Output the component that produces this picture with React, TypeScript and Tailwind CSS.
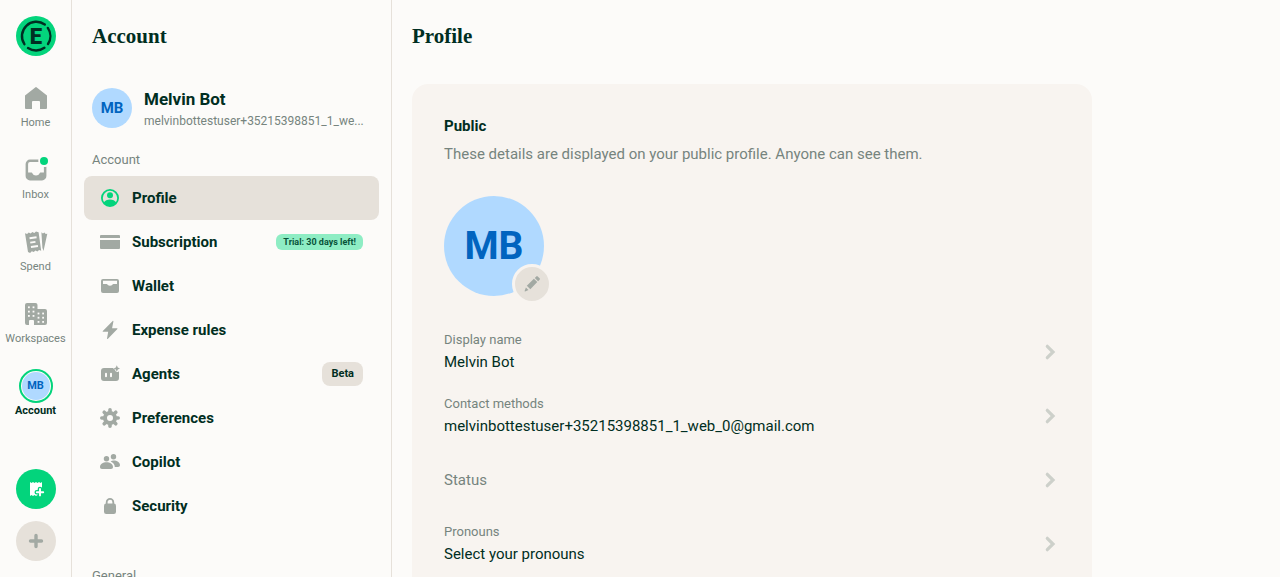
import React from "react";

type IconProps = { className?: string };

const LogoIcon: React.FC = () => (
  <svg viewBox="0 0 40 40" className="h-10 w-10" aria-hidden="true">
    <circle cx="20" cy="20" r="20" fill="#03d47c" />
    <g fill="none" stroke="#002e22" strokeWidth="2.4" strokeLinecap="round">
      <path d="M8.4 28.2A14.4 14.4 0 0 1 28.8 8.5" />
      <path d="M31.8 11.9A14.4 14.4 0 0 1 32 28" />
      <path d="M12 32.1A14.4 14.4 0 0 0 28.4 31.8" />
    </g>
    <text
      x="20"
      y="27.7"
      textAnchor="middle"
      fill="#002e22"
      fontFamily="Roboto, sans-serif"
      fontSize="22"
      fontWeight="900"
    >
      E
    </text>
  </svg>
);

const HomeIcon: React.FC<IconProps> = ({ className }) => (
  <svg viewBox="0 0 24 24" fill="currentColor" className={className} aria-hidden="true">
    <path d="M1 9.4 11.2 1.4a1.3 1.3 0 0 1 1.6 0L23 9.4V22a1 1 0 0 1-1 1h-6v-7a1 1 0 0 0-1-1H9a1 1 0 0 0-1 1v7H2a1 1 0 0 1-1-1z" />
  </svg>
);

const InboxIcon: React.FC<IconProps> = ({ className }) => (
  <svg viewBox="0 0 24 24" fill="currentColor" className={className} aria-hidden="true">
    <path
      fillRule="evenodd"
      d="M6 1.6h8.4a6 6 0 0 0 0 2.5H6A1.9 1.9 0 0 0 4.1 6v8.6h3c.8 0 1.1.5 1.6 1.2.6.9 1.5 1.6 3.3 1.6s2.7-.7 3.3-1.6c.5-.7.8-1.2 1.6-1.2h3V9a6 6 0 0 0 2.5-.3V18a4.400 4.400 0 0 1-4.400 4.400H6A4.400 4.400 0 0 1 1.600 18V6A4.400 4.400 0 0 1 6 1.600z"
    />
    <circle cx="20" cy="3" r="4" fill="#03d47c" />
  </svg>
);

const SpendIcon: React.FC<IconProps> = ({ className }) => (
  <svg viewBox="0 0 24 24" fill="currentColor" className={className} aria-hidden="true">
    <path
      fillRule="evenodd"
      d="m1 3.3 2.1.8 1.6-1.6 2 1 1.6-1.6 2 1 1.7-1.5 2.6.8 2.6 18.6-2.1-.8-1.7 1.5-2-.9-1.6 1.5-2-.9-1.7 1.7-2.1-1zm4.4 4 .3 1.9 7-1-.3-1.9zm.7 4.4.3 1.9 5.2-.8-.3-1.9zm.7 4.4.3 1.9 7-1-.3-1.9z"
    />
    <path d="m17.4 2.3 1.5 1.2 1.6-.9 1.2 1.3 1.6-.2-3.8 17.3-1.1-3.3z" />
  </svg>
);

const WorkspacesIcon: React.FC<IconProps> = ({ className }) => (
  <svg viewBox="0 0 24 24" className={className} aria-hidden="true">
    <path
      fill="currentColor"
      d="M3 1h8.5a2 2 0 0 1 2 2v4H21a2 2 0 0 1 2 2v12a2 2 0 0 1-2 2H10v-4a1 1 0 0 0-1-1H6a1 1 0 0 0-1 1v4H3a2 2 0 0 1-2-2V3a2 2 0 0 1 2-2z"
    />
    <g fill="#fcfbf9">
      {[4.4, 8.7, 13].map((y) => (
        <React.Fragment key={y}>
          <rect x="4" y={y} width="1.8" height="1.8" />
          <rect x="8.6" y={y} width="1.8" height="1.8" />
        </React.Fragment>
      ))}
      {[10.6, 14.8, 19].map((y) => (
        <React.Fragment key={y}>
          <rect x="13.6" y={y} width="1.8" height="1.8" />
          <rect x="18.2" y={y} width="1.8" height="1.8" />
        </React.Fragment>
      ))}
    </g>
  </svg>
);

const ReceiptPlusIcon: React.FC<IconProps> = ({ className }) => (
  <svg viewBox="0 0 20 20" className={className} aria-hidden="true">
    <path
      fill="#ffffff"
      d="m4 3 1.5 1L7 3l1.5 1L10 3l1.5 1L13 3l1.5 1L16 3v14l-1.5-1-1.5 1-1.5-1-1.5 1-1.5-1L7 17l-1.5-1L4 17z"
    />
    <path d="M14 10v6.4M10.800 13.200h6.400" stroke="#03d47c" strokeWidth="4.6" strokeLinecap="round" />
    <path d="M14 10v6.4M10.800 13.200h6.400" stroke="#ffffff" strokeWidth="1.9" strokeLinecap="round" />
  </svg>
);

const PlusIcon: React.FC<IconProps> = ({ className }) => (
  <svg viewBox="0 0 20 20" className={className} aria-hidden="true">
    <path d="M10 4.5v11M4.5 10h11" stroke="currentColor" strokeWidth="3.4" strokeLinecap="round" />
  </svg>
);

const ProfileIcon: React.FC<IconProps> = ({ className }) => (
  <svg viewBox="0 0 20 20" className={className} aria-hidden="true">
    <circle cx="10" cy="10" r="8.1" fill="none" stroke="currentColor" strokeWidth="1.8" />
    <circle cx="10" cy="7.2" r="3" fill="currentColor" />
    <path fill="currentColor" d="M3.8 14.5C5 12.6 7.3 11.6 10 11.6s5 1 6.2 2.900A8 8 0 0 1 10 18a8 8 0 0 1-6.200-3.500z" />
  </svg>
);

const CardIcon: React.FC<IconProps> = ({ className }) => (
  <svg viewBox="0 0 20 20" fill="currentColor" className={className} aria-hidden="true">
    <path d="M1 3h18a1 1 0 0 1 1 1v2H0V4a1 1 0 0 1 1-1zM0 8h20v8a1 1 0 0 1-1 1H1a1 1 0 0 1-1-1z" />
  </svg>
);

const WalletIcon: React.FC<IconProps> = ({ className }) => (
  <svg viewBox="0 0 20 20" fill="currentColor" className={className} aria-hidden="true">
    <path
      fillRule="evenodd"
      d="M3 3h14a2 2 0 0 1 2 2v10a2 2 0 0 1-2 2H3a2 2 0 0 1-2-2V5a2 2 0 0 1 2-2zm0 1.8V8h3c1 0 1.3.4 1.9 1 .5.5 1.1.8 2.1.8s1.6-.3 2.1-.8c.6-.6.9-1 1.9-1h3V4.8z"
    />
  </svg>
);

const BoltIcon: React.FC<IconProps> = ({ className }) => (
  <svg viewBox="0 0 20 20" fill="currentColor" className={className} aria-hidden="true">
    <path d="M12.7 1 2.8 11a.4.4 0 0 0 .3.7h5.1L7 18.6c0 .4.4.6.7.3L17.4 9c.2-.3 0-.7-.3-.7h-5L13.4 1.400c.1-.5-.4-.7-.7-.4z" />
  </svg>
);

const AgentsIcon: React.FC<IconProps> = ({ className }) => (
  <svg viewBox="0 0 20 20" fill="currentColor" className={className} aria-hidden="true">
    <path
      fillRule="evenodd"
      d="M4 4h9.2c.4 1 1 1.3 1.7 1.6.4 1.6 1 2.5 2.1 2.5.7 0 1.3-.3 2-.9V14a3 3 0 0 1-3 3H4a3 3 0 0 1-3-3V7a3 3 0 0 1 3-3zm2 4.7a1 1 0 0 0-1 1v2.6a1 1 0 0 0 2 0V9.700a1 1 0 0 0-1-1zm5 0a1 1 0 0 0-1 1v2.600a1 1 0 0 0 2 0V9.700a1 1 0 0 0-1-1z"
    />
    <path d="m16.8 1.2 1 2.300 2.200 1-2.200 1-1 2.300-1-2.300-2.200-1 2.200-1z" />
  </svg>
);

const GearIcon: React.FC<IconProps> = ({ className }) => (
  <svg viewBox="0 0 20 20" className={className} aria-hidden="true">
    <circle cx="10" cy="10" r="5" fill="none" stroke="currentColor" strokeWidth="4" />
    <g stroke="currentColor" strokeWidth="3.6" strokeLinecap="round">
      <path d="M10 1.8v2M10 16.2v2M1.8 10h2M16.2 10h2M4.2 4.2l1.4 1.4M14.4 14.4l1.4 1.4M4.2 15.8l1.4-1.4M14.4 5.6l1.4-1.4" />
    </g>
  </svg>
);

const CopilotIcon: React.FC<IconProps> = ({ className }) => (
  <svg viewBox="0 0 20 20" fill="currentColor" className={className} aria-hidden="true">
    <circle cx="6.5" cy="6.7" r="2.7" />
    <circle cx="13.5" cy="4.7" r="2.7" />
    <path d="M6.5 10.3c3.5 0 6.5 2 6.5 4.7 0 1.3-.7 2-2 2H2c-1.3 0-2-.7-2-2 0-2.7 3-4.7 6.5-4.7zM10.6 9.4c.8-.7 1.8-1 3-1 3.5 0 6.4 1.900 6.400 4.600 0 1.300-.7 2-2 2h-3.200c0-2.500-1.500-4.500-4.200-5.600z" />
  </svg>
);

const LockIcon: React.FC<IconProps> = ({ className }) => (
  <svg viewBox="0 0 20 20" className={className} aria-hidden="true">
    <path d="M6.7 9V6.2a3.300 3.300 0 0 1 6.600 0V9" fill="none" stroke="currentColor" strokeWidth="1.8" />
    <rect x="4" y="7.6" width="12" height="10.4" rx="2.2" fill="currentColor" />
  </svg>
);

const PencilIcon: React.FC<IconProps> = ({ className }) => (
  <svg viewBox="0 0 16 16" fill="currentColor" className={className} aria-hidden="true">
    <path d="M12.3.4a1 1 0 0 1 1.4 0l1.9 1.9a1 1 0 0 1 0 1.4l-1.5 1.5-3.3-3.3zM9.9 2.7l3.4 3.4-7 7.1-3.5-3.5zM1.9 11.5l2.6 2.6-3.4 1.3a.4.4 0 0 1-.5-.5z" />
  </svg>
);

const ChevronIcon: React.FC<IconProps> = ({ className }) => (
  <svg viewBox="0 0 20 20" fill="none" className={className} aria-hidden="true">
    <path d="M7.3 4.3 13 10l-5.7 5.7" stroke="currentColor" strokeWidth="3.2" strokeLinecap="round" />
  </svg>
);

const tabs = [
  { label: "Home", Icon: HomeIcon },
  { label: "Inbox", Icon: InboxIcon },
  { label: "Spend", Icon: SpendIcon },
  { label: "Workspaces", Icon: WorkspacesIcon },
];

const menuItems = [
  { label: "Profile", Icon: ProfileIcon, active: true },
  { label: "Subscription", Icon: CardIcon, trial: "Trial: 30 days left!" },
  { label: "Wallet", Icon: WalletIcon },
  { label: "Expense rules", Icon: BoltIcon },
  { label: "Agents", Icon: AgentsIcon, badge: "Beta" },
  { label: "Preferences", Icon: GearIcon },
  { label: "Copilot", Icon: CopilotIcon },
  { label: "Security", Icon: LockIcon },
];

const details = [
  { label: "Display name", value: "Melvin Bot" },
  { label: "Contact methods", value: "melvinbottestuser+35215398851_1_web_0@gmail.com" },
  { label: "Status", value: "" },
  { label: "Pronouns", value: "Select your pronouns" },
];

const NavigationRail: React.FC = () => (
  <nav className="flex w-18 shrink-0 flex-col items-center border-r border-[#e6e1da] py-4">
    <a href="#home" aria-label="Expensify">
      <LogoIcon />
    </a>
    <div className="mt-[18px] flex w-full flex-col">
      {tabs.map(({ label, Icon }) => (
        <a key={label} href={`#${label.toLowerCase()}`} className="flex h-18 flex-col items-center gap-[5px] pt-3">
          <Icon className="h-6 w-6 overflow-visible text-[#a2a9a3]" />
          <span className="text-[11px] leading-4">{label}</span>
        </a>
      ))}
      <a href="#account" className="flex h-18 flex-col items-center gap-[5px] pt-3 text-[#002e22]">
        <span className="flex h-6 items-center">
          <span className="flex h-[34px] w-[34px] items-center justify-center rounded-full border-2 border-[#03d47c] p-px">
            <span className="flex h-7 w-7 items-center justify-center rounded-full bg-[#b0d9ff] text-[11px] font-bold text-[#0164bf]">
              MB
            </span>
          </span>
        </span>
        <span className="text-[11px] leading-4 font-bold">Account</span>
      </a>
    </div>
    <div className="mt-auto flex flex-col gap-3">
      <button
        type="button"
        aria-label="Scan receipt"
        className="flex h-10 w-10 items-center justify-center rounded-full bg-[#03d47c]"
      >
        <ReceiptPlusIcon className="h-5 w-5" />
      </button>
      <button
        type="button"
        aria-label="Create"
        className="flex h-10 w-10 items-center justify-center rounded-full bg-[#e6e1da] text-[#a2a9a3]"
      >
        <PlusIcon className="h-5 w-5" />
      </button>
    </div>
  </nav>
);

const AccountMenu: React.FC = () => (
  <aside className="flex w-80 shrink-0 flex-col overflow-hidden border-r border-[#e6e1da]">
    <header className="flex h-18 shrink-0 items-center px-5">
      <h1 className="font-['Liberation_Serif',serif] text-[21px] leading-7 font-bold text-[#002e22]">Account</h1>
    </header>
    <div className="flex-1 overflow-y-auto px-3 pt-4 [scrollbar-width:none]">
      <div className="flex h-10 items-center gap-3 px-2">
        <span className="flex h-10 w-10 shrink-0 items-center justify-center rounded-full bg-[#b0d9ff] font-bold text-[#0164bf]">
          MB
        </span>
        <div className="flex min-w-0 flex-col gap-0.5">
          <p className="text-[17px] leading-6 font-bold text-[#002e22]">Melvin Bot</p>
          <p className="truncate text-[12px] leading-4">melvinbottestuser+35215398851_1_we...</p>
        </div>
      </div>
      <h2 className="mt-6 px-2 text-[13px] leading-4">Account</h2>
      <ul className="mt-2">
        {menuItems.map(({ label, Icon, active, trial, badge }) => (
          <li key={label}>
            <a
              href={`#${label.toLowerCase().replace(" ", "-")}`}
              aria-current={active ? "page" : undefined}
              className={`flex h-11 items-center gap-3 rounded-lg px-4 ${active ? "bg-[#e6e1da]" : ""}`}
            >
              <Icon className={`h-5 w-5 shrink-0 ${active ? "text-[#03d47c]" : "text-[#a2a9a3]"}`} />
              <span className="flex-1 font-bold text-[#002e22]">{label}</span>
              {trial && (
                <span className="rounded-md bg-[#8eedc4] px-[7px] text-[9px] leading-4 font-bold text-[#085239]">
                  {trial}
                </span>
              )}
              {badge && (
                <span className="rounded-lg bg-[#e6e1da] px-[9px] text-[11px] leading-6 font-bold text-[#002e22]">
                  {badge}
                </span>
              )}
            </a>
          </li>
        ))}
      </ul>
      <h2 className="mt-10 px-2 text-[13px] leading-4">General</h2>
    </div>
  </aside>
);

const ProfilePage: React.FC = () => (
  <main className="flex min-w-0 flex-1 flex-col">
    <header className="flex h-18 shrink-0 items-center px-5">
      <h1 className="font-['Liberation_Serif',serif] text-[21px] leading-7 font-bold text-[#002e22]">Profile</h1>
    </header>
    <div className="flex-1 overflow-y-auto px-5 pt-3 [scrollbar-width:none]">
      <section className="max-w-[680px] rounded-2xl bg-[#f8f4f0] p-8">
        <h2 className="font-bold text-[#002e22]">Public</h2>
        <p className="mt-2">These details are displayed on your public profile. Anyone can see them.</p>
        <div className="relative mt-8 h-25 w-25">
          <span className="flex h-full w-full items-center justify-center rounded-full bg-[#b0d9ff] text-[39px] font-bold text-[#0164bf]">
            MB
          </span>
          <button
            type="button"
            aria-label="Edit photo"
            className="absolute -right-2 -bottom-2 flex h-10 w-10 items-center justify-center rounded-full border-3 border-[#f8f4f0] bg-[#e6e1da] text-[#a2a9a3]"
          >
            <PencilIcon className="h-4 w-4" />
          </button>
        </div>
        <div className="mt-6">
          {details.map(({ label, value }) => (
            <button key={label} type="button" className="flex h-16 w-full items-center gap-3 text-left">
              <span className="flex min-w-0 flex-1 flex-col gap-1">
                <span className={value ? "text-[13px] leading-4" : ""}>{label}</span>
                {value && <span className="truncate text-[#002e22]">{value}</span>}
              </span>
              <ChevronIcon className="h-5 w-5 shrink-0 text-[#cdd0ca]" />
            </button>
          ))}
        </div>
      </section>
    </div>
  </main>
);

const App: React.FC = () => {
  return (
    <div className="flex h-screen overflow-hidden bg-[#fcfbf9] font-[Roboto,sans-serif] text-[15px] leading-5 text-[#76847e]">
      <NavigationRail />
      <AccountMenu />
      <ProfilePage />
    </div>
  );
};

export default App;
